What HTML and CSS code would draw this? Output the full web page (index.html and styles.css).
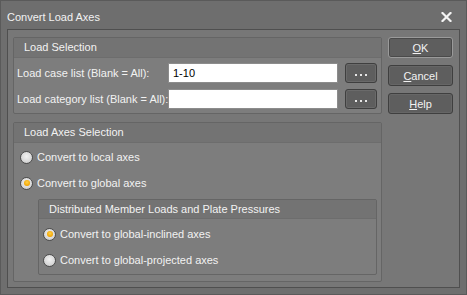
FILE: index.html
```html
<!DOCTYPE html>
<html lang="en">
<head>
  <meta charset="UTF-8">
  <title>Convert Load Axes</title>
  <link rel="stylesheet" href="styles.css">
</head>
<body>

  <div class="window">
    <!-- title bar -->
    <div class="titlebar">
      <span class="title">Convert Load Axes</span>
      <svg class="close" width="11" height="10" viewBox="0 0 11 10">
        <path d="M1.5 1 L9.5 9 M9.5 1 L1.5 9" stroke="#f4f4f4" stroke-width="2.2" stroke-linecap="square"/>
      </svg>
    </div>

    <div class="client">
      <div class="main">

        <!-- Load Selection -->
        <div class="group">
          <div class="group-head">Load Selection</div>
          <div class="group-body sel-body">
            <div class="field-row">
              <label class="field-label">Load case list (Blank = All):</label>
              <input class="field" type="text" value="1-10">
              <button class="dots" title="..."><i></i><i></i><i></i></button>
            </div>
            <div class="field-row">
              <label class="field-label">Load category list (Blank = All):</label>
              <input class="field" type="text" value="">
              <button class="dots" title="..."><i></i><i></i><i></i></button>
            </div>
          </div>
        </div>

        <!-- Load Axes Selection -->
        <div class="group axes">
          <div class="group-head">Load Axes Selection</div>
          <div class="group-body axes-body">
            <div class="radio-row"><span class="radio"></span>Convert to local axes</div>
            <div class="radio-row"><span class="radio on"></span>Convert to global axes</div>

            <div class="group inner">
              <div class="group-head inner-head">Distributed Member Loads and Plate Pressures</div>
              <div class="group-body inner-body">
                <div class="radio-row"><span class="radio on"></span>Convert to global-inclined axes</div>
                <div class="radio-row"><span class="radio"></span>Convert to global-projected axes</div>
              </div>
            </div>
          </div>
        </div>

      </div>

      <!-- buttons -->
      <div class="buttons">
        <button class="btn default"><u>O</u>K</button>
        <button class="btn"><u>C</u>ancel</button>
        <button class="btn"><u>H</u>elp</button>
      </div>
    </div>
  </div>

</body>
</html>
```

FILE: styles.css
```css
/* ================================
   Dialog frame
   ================================ */

html, body {
  margin: 0;
  padding: 0;
  background: #6c6c6c;
}

.window {
  width: 467px;
  height: 295px;
  box-sizing: border-box;
  border: 1px solid #5a5a5a;
  background: #6e6e6e;
  font-family: "Liberation Sans", Arial, sans-serif;
  font-size: 11px;
  color: #f2f2f2;
}

.titlebar {
  height: 28px;
  display: flex;
  align-items: center;
  justify-content: space-between;
  padding: 0 14px 0 6px;
}

.title {
  font-size: 11px;
  padding-top: 4px;
}

.close {
  display: block;
  margin-top: 3px;
}

/* client area with its dark outline */
.client {
  margin: 0 6px 0 6px;
  height: 259px;
  box-sizing: border-box;
  border: 1px solid #4f4f4f;
  background: #777777;
  display: flex;
  padding: 7px 5px 5px 5px;
  gap: 6px;
}

.main {
  width: 369px;
  display: flex;
  flex-direction: column;
  gap: 8px;
}

/* ================================
   Group boxes
   ================================ */

.group {
  border: 1px solid #656565;
  border-radius: 2px;
  background: #7d7d7d;
}

.group-head {
  height: 19px;
  line-height: 19px;
  padding-left: 10px;
  background: #737373;
  border-bottom: 1px solid #6d6d6d;
}

.sel-body {
  padding: 5px 4px 4px 3px;
  display: flex;
  flex-direction: column;
  gap: 6px;
}

.field-row {
  display: flex;
  align-items: center;
  height: 20px;
}

.field-label {
  width: 151px;
  flex-shrink: 0;
  white-space: nowrap;
}

.field {
  width: 170px;
  height: 20px;
  box-sizing: border-box;
  border: 1px solid #8c8c8c;
  background: #ffffff;
  font-family: "Liberation Sans", Arial, sans-serif;
  font-size: 11px;
  padding: 0 4px;
  color: #000;
  margin: 0;
}

/* the "..." browse button, dots drawn as small squares */
.dots {
  margin-left: 7px;
  width: 32px;
  height: 20px;
  box-sizing: border-box;
  border: 1px solid #3f3f3f;
  border-radius: 3px;
  background: #5e5e5e;
  box-shadow: inset 0 0 0 1px #6a6a6a;
  padding: 4px 0 0 0;
  display: flex;
  justify-content: center;
  align-items: center;
  gap: 3px;
}

.dots i {
  width: 2px;
  height: 2px;
  background: #e6e6e6;
}

.axes {
  flex: 1;
}

.axes-body {
  padding: 1px 4px 4px 5px;
}

.radio-row {
  height: 26px;
  display: flex;
  align-items: center;
  gap: 4px;
  padding-left: 1px;
}

/* the round radio knobs */
.radio {
  width: 11px;
  height: 11px;
  border-radius: 50%;
  border: 1px solid #4c4c4c;
  background: radial-gradient(circle at 50% 40%, #f2f2f2 0%, #d8d8d8 60%, #b8b8b8 100%);
  position: relative;
}

.radio.on::after {
  content: "";
  position: absolute;
  left: 2.5px;
  top: 2.5px;
  width: 6px;
  height: 6px;
  border-radius: 50%;
  background: radial-gradient(circle at 50% 40%, #ffd24a 0%, #f2a400 70%, #c47a00 100%);
}

.inner {
  margin: 3px 0 0 19px;
}

.inner-head {
  height: 18px;
  line-height: 18px;
}

.inner-body {
  padding: 2px 0 1px 3px;
}

/* ================================
   Command buttons
   ================================ */

.buttons {
  display: flex;
  flex-direction: column;
  gap: 7px;
}

.btn {
  width: 65px;
  height: 21px;
  box-sizing: border-box;
  border: 1px solid #3f3f3f;
  border-radius: 3px;
  background: #5e5e5e;
  box-shadow: inset 0 0 0 1px #666666;
  color: #f2f2f2;
  font-family: "Liberation Sans", Arial, sans-serif;
  font-size: 11px;
  padding: 0;
}

.btn.default {
  border-color: #9a9a9a;
  box-shadow: inset 0 0 0 1px #4a4a4a;
}
```
